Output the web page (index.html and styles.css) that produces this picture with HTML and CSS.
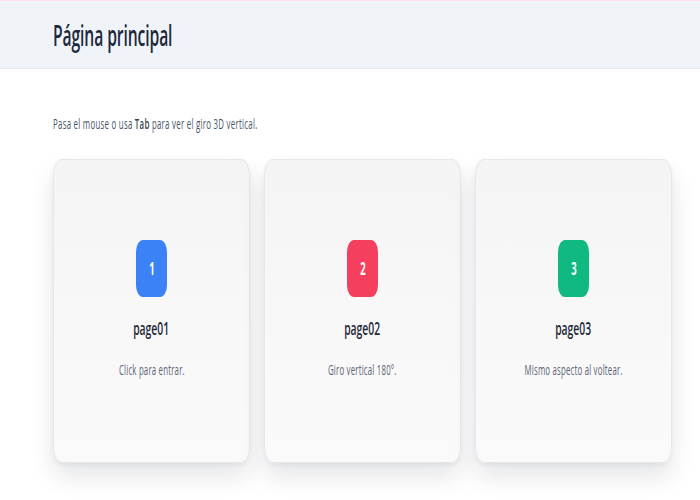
FILE: index.html
```html
<!DOCTYPE html>
<html lang="es">
<head>
<meta charset="utf-8">
<title>Página principal</title>
<link rel="stylesheet" href="styles.css">
</head>
<body>
  <header class="topbar">
    <h1 class="title narrow-left">Página principal</h1>
  </header>
  <main class="content">
    <p class="hint narrow-left">Pasa el mouse o usa <strong>Tab</strong> para ver el giro 3D vertical.</p>
    <div class="grid">
      <a class="card" href="#">
        <span class="badge badge-blue"><span class="narrow">1</span></span>
        <span class="card-title narrow">page01</span>
        <span class="card-desc narrow">Click para entrar.</span>
      </a>
      <a class="card" href="#">
        <span class="badge badge-red"><span class="narrow">2</span></span>
        <span class="card-title narrow">page02</span>
        <span class="card-desc narrow">Giro vertical 180°.</span>
      </a>
      <a class="card" href="#">
        <span class="badge badge-green"><span class="narrow">3</span></span>
        <span class="card-title narrow">page03</span>
        <span class="card-desc narrow">Mismo aspecto al voltear.</span>
      </a>
    </div>
  </main>
</body>
</html>
```

FILE: styles.css
```css
html, body {
  margin: 0;
  padding: 0;
  background: #ffffff;
}

body {
  font-family: "Open Sans", "Noto Sans", sans-serif;
  color: #1f2937;
}

/* condensed look of the reference text */
.narrow {
  display: inline-block;
  transform: scaleX(0.56);
  transform-origin: 50% 50%;
}

.narrow-left {
  transform: scaleX(0.56);
  transform-origin: 0 50%;
}

.topbar {
  height: 67px;
  background: #f0f4f9;
  border-top: 1px solid #fbe4ec;
  border-bottom: 1px solid #e2e8f0;
  display: flex;
  align-items: center;
  padding-left: 53px;
}

.title {
  margin: 0;
  font-size: 28px;
  font-weight: 600;
  line-height: 36px;
  color: #1e293b;
  letter-spacing: -0.2px;
  white-space: nowrap;
}

.content {
  padding: 45px 28px 40px 53px;
}

.hint {
  margin: 0 0 25px;
  font-size: 14px;
  line-height: 20px;
  letter-spacing: 0.5px;
  color: #475569;
  white-space: nowrap;
}

.hint strong {
  font-weight: 600;
  color: #334155;
}

.grid {
  display: grid;
  grid-template-columns: repeat(3, 197px);
  gap: 14px;
}

.card {
  height: 304px;
  border: 1px solid #e5e7eb;
  border-radius: 9px / 16px;
  background: linear-gradient(180deg, #f4f4f5 0%, #f8f8f9 55%, #fafafb 100%);
  box-shadow: 0 14px 24px rgba(15, 23, 42, 0.11), 0 2px 5px rgba(15, 23, 42, 0.05);
  display: flex;
  flex-direction: column;
  align-items: center;
  justify-content: flex-start;
  text-decoration: none;
  padding-top: 80px;
  box-sizing: border-box;
}

.badge {
  width: 31px;
  height: 57px;
  border-radius: 7px / 12px;
  display: flex;
  align-items: center;
  justify-content: center;
  color: #ffffff;
  font-size: 17px;
  font-weight: 700;
  margin-bottom: 19px;
}

.badge-blue { background: #3b82f6; }
.badge-red { background: #f43f5e; }
.badge-green { background: #10b981; }

.card-title {
  font-size: 18.5px;
  font-weight: 600;
  line-height: 24px;
  color: #1f2937;
  margin-bottom: 20px;
  white-space: nowrap;
}

.card-desc {
  font-size: 14px;
  line-height: 20px;
  letter-spacing: 0.35px;
  color: #5b6474;
  white-space: nowrap;
}
```
